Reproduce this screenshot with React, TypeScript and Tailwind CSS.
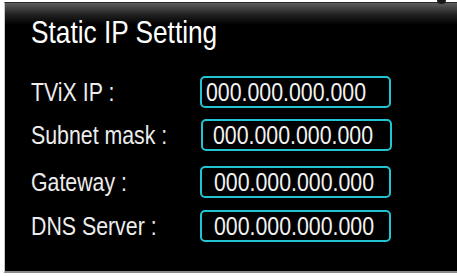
const rows = [
  { label: "TViX IP :", value: "000.000.000.000", rowClass: "mt-0", boxClass: "ml-0 pl-[4px]" },
  { label: "Subnet mask :", value: "000.000.000.000", rowClass: "mt-[11px]", boxClass: "ml-[1px] pl-[10px]" },
  { label: "Gateway :", value: "000.000.000.000", rowClass: "mt-[15px]", boxClass: "ml-0 pl-[12px]" },
  { label: "DNS Server :", value: "000.000.000.000", rowClass: "mt-[12px]", boxClass: "ml-0 pl-[12px]" },
];

// the screen uses a condensed face; Liberation Sans squeezed sideways stands in for it
function Narrow(props: { children: React.ReactNode }) {
  return <span className="inline-block origin-left scale-x-[0.82] whitespace-nowrap">{props.children}</span>;
}

export default function App() {
  return (
    <div className="relative h-[276px] w-[457px] overflow-hidden bg-white font-[family-name:'Liberation_Sans',Arial,sans-serif]">
      {/* little dark blob poking over the top edge */}
      <div className="absolute left-[437px] top-0 h-[4px] w-[9px] rounded-b-full bg-[#1a1a1a]" />
      <div className="ml-[4px] mt-[2px] h-[271px] border-l border-t border-b-2 border-l-[#c8c8c8] border-t-[#2a2a2a] border-b-[#8a8a8a] bg-[linear-gradient(to_bottom,#5c5c5c_0px,#202020_12px,#000_22px)] pl-[26px] pt-[11px]">
        <h1 className="text-[32px] leading-[36px] text-white">
          <Narrow>Static IP Setting</Narrow>
        </h1>
        <div className="mt-[26px] flex flex-col">
          {rows.map((r) => (
            <div key={r.label} className={`flex items-center ${r.rowClass}`}>
              <span className="w-[169px] text-[26px] leading-[32px] text-[#ececec]">
                <Narrow>{r.label}</Narrow>
              </span>
              <div
                className={`flex h-[32px] w-[191px] items-center overflow-hidden rounded-[5px] border-2 border-[#22c4d2] text-[26px] leading-[28px] text-[#f2f2f2] ${r.boxClass}`}
              >
                <Narrow>{r.value}</Narrow>
              </div>
            </div>
          ))}
        </div>
      </div>
    </div>
  );
}
